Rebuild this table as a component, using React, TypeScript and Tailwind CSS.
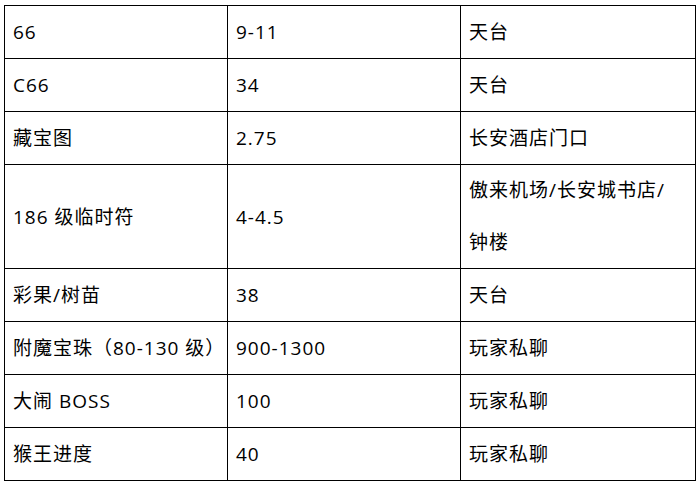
import React from 'react';

const rows: [string, string, React.ReactNode][] = [
  ['66', '9-11', '天台'],
  ['C66', '34', '天台'],
  ['藏宝图', '2.75', '长安酒店门口'],
  [
    '186 级临时符',
    '4-4.5',
    <div className="leading-[51.5px]">
      傲来机场/长安城书店/
      <br />
      钟楼
    </div>,
  ],
  ['彩果/树苗', '38', '天台'],
  ['附魔宝珠（80-130 级）', '900-1300', '玩家私聊'],
  ['大闹 BOSS', '100', '玩家私聊'],
  ['猴王进度', '40', '玩家私聊'],
];

const App: React.FC = () => {
  return (
    <div
      className="w-[699px] h-[485px] bg-white pl-[4px] pt-[5px] text-black"
      style={{ fontFamily: '"Open Sans", "Noto Sans CJK SC", sans-serif' }}
    >
      <table className="border-collapse table-fixed w-[691px] text-[19px] tracking-[1px]">
        <colgroup>
          <col className="w-[223px]" />
          <col className="w-[233px]" />
          <col className="w-[235px]" />
        </colgroup>
        <tbody>
          {rows.map(([name, price, place], i) => (
            <tr key={i}>
              {[name, price, place].map((cell, j) => (
                <td
                  key={j}
                  className="border border-black pl-[8px] pr-0 py-0 leading-[52px] align-middle whitespace-nowrap"
                >
                  {cell}
                </td>
              ))}
            </tr>
          ))}
        </tbody>
      </table>
    </div>
  );
};

export default App;
